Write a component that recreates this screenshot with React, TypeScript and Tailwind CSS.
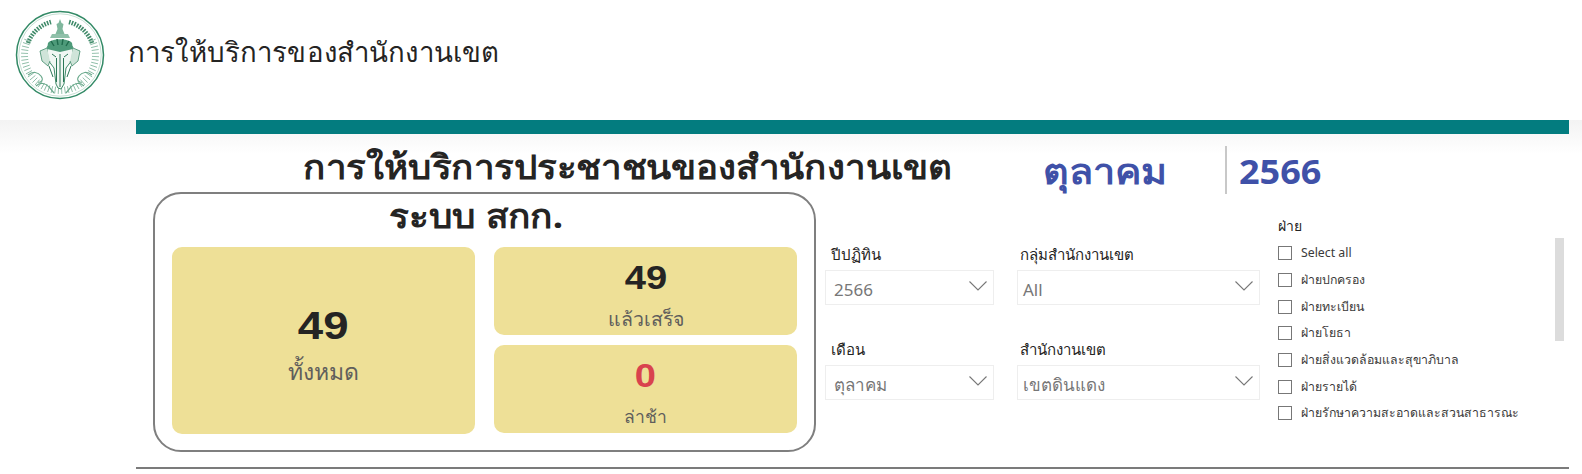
const thai = "font-['Noto_Sans','Noto_Sans_CJK_SC',sans-serif]";

const filters = [
  { label: "ปีปฏิทิน", value: "2566", labelClass: "pl-[6px]", boxClass: "pl-[8px]" },
  { label: "กลุ่มสำนักงานเขต", value: "All", labelClass: "pl-[3px]", boxClass: "pl-[5px]" },
  { label: "เดือน", value: "ตุลาคม", labelClass: "pl-[6px]", boxClass: "pl-[8px]" },
  { label: "สำนักงานเขต", value: "เขตดินแดง", labelClass: "pl-[3px]", boxClass: "pl-[5px]" },
];

const sections = [
  "Select all",
  "ฝ่ายปกครอง",
  "ฝ่ายทะเบียน",
  "ฝ่ายโยธา",
  "ฝ่ายสิ่งแวดล้อมและสุขาภิบาล",
  "ฝ่ายรายได้",
  "ฝ่ายรักษาความสะอาดและสวนสาธารณะ",
];

function Seal() {
  // tick ring runs round the sides and bottom, the top carries the lettering band
  const ticks = Array.from({ length: 44 }, (_, i) => 66 + i * 5.300);
  return (
    <svg viewBox="0 0 90 90" className="w-[90px] h-[90px] shrink-0">
      <circle cx="45" cy="45" r="43.500" fill="none" stroke="#338a66" strokeWidth="1.500" />
      <circle cx="45" cy="45" r="41.200" fill="none" stroke="#8fc0a9" strokeWidth="0.500" />
      {ticks.map((a) => (
        <line key={a} x1="45" y1="6" x2="45" y2="13" stroke="#6ca98d" strokeWidth="0.700" transform={`rotate(${a} 45 45)`} />
      ))}
      <path d="M13 33A34 34 0 0 1 36 12" fill="none" stroke="#3f8a69" strokeWidth="4.500" strokeDasharray="1.600 1.200" />
      <path d="M54 12A34 34 0 0 1 77 33" fill="none" stroke="#3f8a69" strokeWidth="4.500" strokeDasharray="1.600 1.200" />
      <path d="M45 9l-1.500 4-2 1 1 5-2 5h9l-2-5 1-5-2-1z" fill="#7fb79d" />
      <path d="M37 24h16l2 4H35z" fill="#8fc0a9" />
      <path d="M32 38c3-9 23-9 26 0l-1 12-6 8-2 16-3 5-3-1-2-4-2-16-6-8z" fill="#f1f7f3" stroke="#3f8a69" strokeWidth="1" />
      <path d="M32 38l-7 3 2 10 6 5 2-5M58 38l7 3-2 10-6 5-2-5" fill="#cfe4d9" stroke="#3f8a69" strokeWidth="0.800" />
      <path d="M33 33c4-5 20-5 24 0l1 6-13 3-13-3z" fill="#4d9a79" />
      <path d="M36 31l3 5M42 29l1 6M48 29l-1 6M54 31l-3 5" fill="none" stroke="#1f6b4c" strokeWidth="1.400" />
      <path d="M37 44l4 3M53 44l-4 3M41.500 48v24M48.500 48v24M45 44v33M34 56l4 11M56 56l-4 11" fill="none" stroke="#2b7757" strokeWidth="1" />
      <path d="M13 65c5-4 10-3 13 1s0 7-3 6M77 65c-5-4-10-3-13 1s0 7 3 6M21 76c4-4 10-3 13 1l5 6M69 76c-4-4-10-3-13 1l-5 6" fill="none" stroke="#6aa98c" strokeWidth="1.200" />
    </svg>
  );
}

function Stat({
  value,
  label,
  danger,
  className,
  valueClass,
  labelClass,
}: {
  value: string;
  label: string;
  danger?: boolean;
  className: string;
  valueClass: string;
  labelClass: string;
}) {
  return (
    <div className={`bg-[#eee097] rounded-[10px] flex flex-col items-center ${className}`}>
      <span className={`font-['Liberation_Sans'] font-bold leading-none ${danger ? "text-[#d9434e]" : "text-[#252423]"} ${valueClass}`}>
        {value}
      </span>
      <span className={`${thai} text-[#605e5c] leading-none ${labelClass}`}>{label}</span>
    </div>
  );
}

function Dropdown({ label, value, labelClass, boxClass }: { label: string; value: string; labelClass: string; boxClass: string }) {
  return (
    <div className="flex flex-col">
      <span className={`${thai} text-[15px] leading-[20px] text-[#252423] mb-[6px] ${labelClass}`}>{label}</span>
      <div className={`h-[35px] border border-[#eeeeee] flex items-center justify-between pr-[5px] ${boxClass}`}>
        <span className={`${thai} text-[17px] text-[#777777] leading-none pt-[3px]`}>{value}</span>
        <svg viewBox="0 0 20 12" className="w-[20px] h-[12px] mb-[3px]">
          <path d="M1.500 1.500 10 10l8.500-8.500" fill="none" stroke="#777777" strokeWidth="1.100" />
        </svg>
      </div>
    </div>
  );
}

export default function App() {
  return (
    <div className="w-[1582px] h-[474px] bg-white overflow-hidden flex flex-col">
      <header className="h-[120px] shrink-0 flex items-center pl-[15px] pb-[10px] gap-[23px] bg-white">
        <Seal />
        <h1 className={`${thai} text-[27.600px] font-normal text-[#252423] leading-none mb-[6px] tracking-[0.15px]`}>การให้บริการของสำนักงานเขต</h1>
      </header>

      <div className="flex-1 bg-gradient-to-b from-[#f3f3f3] to-white to-[34px] pl-[136px] pr-[13px]">
        <div className="h-[14px] bg-[#037c7f]" />

        <div className="flex h-[60px]">
          <h2 className={`${thai} w-[649px] pl-[167px] pt-[12px] text-[34px] font-bold text-[#252423] leading-[40px] whitespace-nowrap shrink-0`}>
            <span className="inline-block origin-left scale-x-[1.08]">การให้บริการประชาชนของสำนักงานเขต</span>
          </h2>
          <div className={`${thai} w-[440px] pl-[258px] pt-[17px] text-[35px] font-bold text-[#3f51a8] leading-[40px] whitespace-nowrap shrink-0`}>
            <span className="inline-block origin-left scale-x-[1.13]">ตุลาคม</span>
          </div>
          <div className="mt-[12px] pl-[12px] h-[48px] border-l-2 border-[#c8c8c8] font-['Noto_Sans'] text-[34px] font-bold text-[#3f51a8] leading-[50px]">
            <span className="inline-block origin-left scale-x-[1.06]">2566</span>
          </div>
        </div>

        <div className="flex">
          <section className="w-[663px] h-[260px] ml-[17px] -mt-[2px] border-2 border-[#7f7f7f] rounded-[28px] px-[17px] shrink-0">
            <h3 className={`${thai} text-center pr-[18px] text-[33px] font-bold text-[#252423] leading-[48px] h-[54px] -mt-[2px] mb-[1px] whitespace-nowrap`}>
              <span className="inline-block scale-x-[1.12]">ระบบ สกก.</span>
            </h3>
            <div className="flex gap-[19px]">
              <Stat
                value="49"
                label="ทั้งหมด"
                className="w-[303px] h-[187px] pt-[60px]"
                valueClass="text-[38px] scale-x-[1.2]"
                labelClass="text-[23px] mt-[15px]"
              />
              <div className="flex flex-col gap-[10px]">
                <Stat
                  value="49"
                  label="แล้วเสร็จ"
                  className="w-[303px] h-[88px] pt-[13px]"
                  valueClass="text-[34px] scale-x-[1.12]"
                  labelClass="text-[19.500px] mt-[15px]"
                />
                <Stat
                  value="0"
                  label="ล่าช้า"
                  danger
                  className="w-[303px] h-[88px] pt-[13px]"
                  valueClass="text-[34px] scale-x-[1.12]"
                  labelClass="text-[17.500px] mt-[16px]"
                />
              </div>
            </div>
          </section>

          <div className="w-[424px] ml-[9px] mt-[50px] grid grid-cols-[169px_243px] gap-x-[23px] gap-y-[34px] h-fit shrink-0">
            {filters.map((f) => (
              <Dropdown key={f.label} label={f.label} value={f.value} labelClass={f.labelClass} boxClass={f.boxClass} />
            ))}
          </div>

          <div className="relative flex-1 mt-[22px] ml-[29px]">
            <div className={`${thai} text-[14px] leading-[20px] text-[#252423]`}>ฝ่าย</div>
            <ul className="mt-[4px]">
              {sections.map((s) => (
                <li key={s} className="flex items-center h-[26.700px] gap-[9px]">
                  <span className="w-[14px] h-[14px] border border-[#777777] bg-white shrink-0" />
                  <span className={`${thai} text-[12.300px] text-[#3b3a39] leading-none whitespace-nowrap`}>{s}</span>
                </li>
              ))}
            </ul>
            <div className="absolute left-[277px] top-[22px] w-[9px] h-[103px] bg-[#dcdcdc]" />
          </div>
        </div>

        <div className="mt-[15px] h-[2px] bg-[#7b7b7b]" />
      </div>
    </div>
  );
}
